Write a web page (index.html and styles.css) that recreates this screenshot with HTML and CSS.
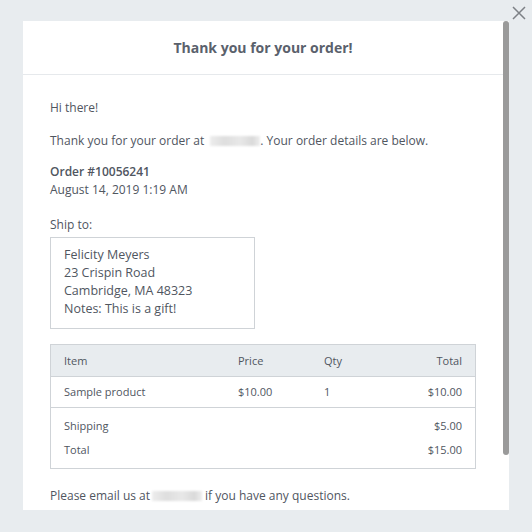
FILE: index.html
```html
<!DOCTYPE html>
<html lang="en">
<head>
<meta charset="utf-8">
<title>Thank you for your order!</title>
<link rel="stylesheet" href="styles.css">
</head>
<body>
  <button class="close" aria-label="Close">
    <svg width="14" height="14" viewBox="0 0 14 14"><path d="M1 1 L13 13 M13 1 L1 13" stroke="#7d8186" stroke-width="1.5" fill="none"/></svg>
  </button>
  <div class="modal">
    <div class="modal-scroll">
      <div class="modal-header">
        <h1 class="title">Thank you for your order!</h1>
      </div>
      <div class="modal-body">
        <p class="greet">Hi there!</p>
        <p class="intro">Thank you for your order at <span class="blur blur-shop"></span>. Your order details are below.</p>
        <div class="order">
          <div class="order-num">Order #10056241</div>
          <div class="order-date">August 14, 2019 1:19 AM</div>
        </div>
        <p class="ship-label">Ship to:</p>
        <div class="address">
          <div>Felicity Meyers</div>
          <div>23 Crispin Road</div>
          <div>Cambridge, MA 48323</div>
          <div>Notes: This is a gift!</div>
        </div>
        <table class="items">
          <thead>
            <tr><th class="c-item">Item</th><th class="c-price">Price</th><th class="c-qty">Qty</th><th class="c-total">Total</th></tr>
          </thead>
          <tbody>
            <tr><td class="c-item">Sample product</td><td class="c-price">$10.00</td><td class="c-qty">1</td><td class="c-total">$10.00</td></tr>
          </tbody>
          <tfoot>
            <tr class="first"><td class="c-item">Shipping</td><td></td><td></td><td class="c-total">$5.00</td></tr>
            <tr class="last"><td class="c-item">Total</td><td></td><td></td><td class="c-total">$15.00</td></tr>
          </tfoot>
        </table>
        <p class="outro">Please email us at<span class="blur blur-mail"></span>if you have any questions.</p>
      </div>
    </div>
    <div class="scroll-thumb"></div>
  </div>
</body>
</html>
```
FILE: styles.css
```css
html, body {
  margin: 0;
  padding: 0;
  height: 100%;
}
body {
  background: #e8ecef;
  font-family: "Open Sans", "Noto Sans", sans-serif;
  color: #50565f;
  overflow: hidden;
}
.close {
  position: absolute;
  top: 6px;
  left: 512px;
  width: 14px;
  height: 14px;
  padding: 0;
  border: 0;
  background: none;
  line-height: 0;
}
.modal {
  position: relative;
  margin: 21px 0 0 23px;
  width: 486px;
  height: 489px;
  background: #fff;
  overflow: hidden;
}
.modal-scroll {
  width: 480px;
}
.scroll-thumb {
  position: absolute;
  top: 0;
  right: 0;
  width: 6px;
  height: 434px;
  background: #9a9a9a;
  border-radius: 3px;
}
.modal-header {
  height: 53px;
  border-bottom: 1px solid #e6e9ec;
  display: flex;
  align-items: center;
  justify-content: center;
}
.title {
  margin: 0;
  font-size: 14px;
  font-weight: 700;
  color: #5a616c;
}
.modal-body {
  padding: 24px 27px 62px;
  font-size: 12px;
  line-height: 18px;
}
p {
  margin: 0;
}
.intro {
  margin-top: 15px;
}
.blur {
  display: inline-block;
  height: 10px;
  vertical-align: -1px;
  background: linear-gradient(90deg, #ededed, #dedede 30%, #e8e8e8 60%, #dadada 85%, #eeeeee);
  filter: blur(1px);
}
.blur-shop {
  width: 50px;
  margin-left: 3px;
}
.blur-mail {
  width: 50px;
  margin: 0 3px 0 2px;
}
.order {
  margin-top: 13px;
}
.order-num {
  font-weight: 600;
}
.ship-label {
  margin-top: 17px;
}
.address {
  margin-top: 3px;
  width: 177px;
  border: 1px solid #cfd3d7;
  padding: 8px 13px 10px;
  font-size: 12.5px;
}
.items {
  margin-top: 15px;
  width: 100%;
  border-collapse: collapse;
  table-layout: fixed;
  border: 1px solid #cfd3d7;
  font-size: 11px;
  line-height: 15px;
}
.items th {
  font-weight: 400;
  background: #e8ecef;
  text-align: left;
  padding: 8px 0 8px 13px;
  border-bottom: 1px solid #cfd3d7;
}
.items td {
  padding: 7px 0 8px 13px;
}
.items tbody td {
  border-bottom: 1px solid #cfd3d7;
}
.items tfoot tr.first td {
  padding-top: 10px;
  padding-bottom: 4px;
}
.items tfoot tr.last td {
  padding-top: 5px;
  padding-bottom: 11px;
}
.items .c-item {
  width: 161px;
}
.items .c-price {
  width: 73px;
}
.items .c-qty {
  width: 60px;
}
.items .c-total {
  text-align: right;
  padding-right: 13px;
}
.outro {
  margin-top: 18px;
}
```
